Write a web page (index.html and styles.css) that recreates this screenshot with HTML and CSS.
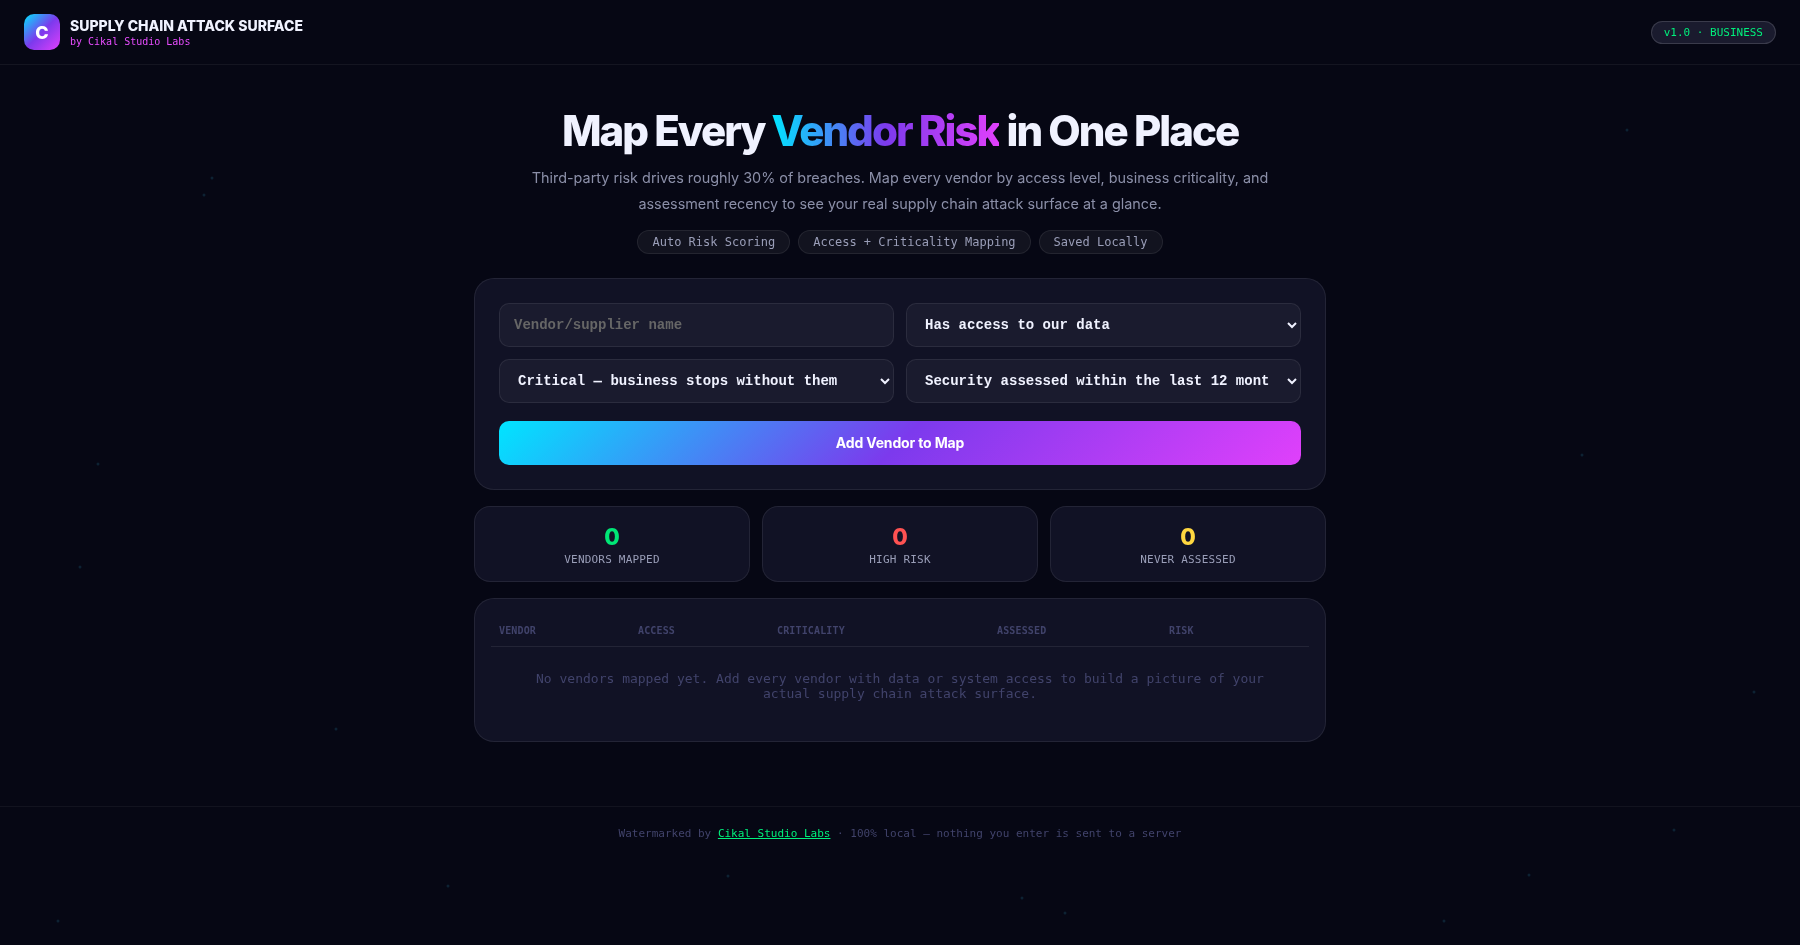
FILE: index.html
```html
<!DOCTYPE html>
<html lang="en">
<head>
  <meta charset="UTF-8">
  <title>Supply Chain Attack Surface</title>
  <link rel="stylesheet" href="styles.css">
</head>
<body>
  <svg class="stars" width="1800" height="945" viewBox="0 0 1800 945" aria-hidden="true">
    <circle cx="1627" cy="130" r="1.5"/><circle cx="212" cy="178" r="1.5"/><circle cx="204" cy="195" r="1.5"/>
    <circle cx="98" cy="464" r="1.5"/><circle cx="1582" cy="455" r="1.5"/><circle cx="336" cy="729" r="1.5"/>
    <circle cx="1754" cy="692" r="1.5"/><circle cx="1674" cy="830" r="1.5"/><circle cx="448" cy="886" r="1.5"/>
    <circle cx="728" cy="876" r="1.5"/><circle cx="1022" cy="898" r="1.5"/><circle cx="1065" cy="913" r="1.5"/>
    <circle cx="58" cy="921" r="1.5"/><circle cx="1444" cy="921" r="1.5"/><circle cx="1529" cy="875" r="1.5"/>
    <circle cx="80" cy="567" r="1.5"/>
  </svg>

  <header class="topbar">
    <div class="brand">
      <div class="logo">C</div>
      <div>
        <div class="brand-title">SUPPLY CHAIN ATTACK SURFACE</div>
        <div class="brand-sub">by Cikal Studio Labs</div>
      </div>
    </div>
    <span class="version">v1.0 · BUSINESS</span>
  </header>

  <main class="page">
    <section class="hero">
      <h1>Map Every <span class="grad">Vendor Risk</span> in One Place</h1>
      <p>Third-party risk drives roughly 30% of breaches. Map every vendor by access level, business criticality, and assessment recency to see your real supply chain attack surface at a glance.</p>
      <div class="pills">
        <span class="pill">Auto Risk Scoring</span>
        <span class="pill">Access + Criticality Mapping</span>
        <span class="pill">Saved Locally</span>
      </div>
    </section>

    <section class="card form-card">
      <div class="form-grid">
        <input class="field" type="text" placeholder="Vendor/supplier name">
        <select class="field">
          <option>Has access to our data</option>
          <option>Has access to our systems</option>
          <option>No direct access</option>
        </select>
        <select class="field">
          <option>Critical — business stops without them</option>
          <option>Important — painful to replace</option>
          <option>Low — easily replaced</option>
        </select>
        <select class="field">
          <option>Security assessed within the last 12 months</option>
          <option>Assessed over 12 months ago</option>
          <option>Never assessed</option>
        </select>
      </div>
      <button class="add-btn">Add Vendor to Map</button>
    </section>

    <section class="stats">
      <div class="stat">
        <div class="stat-num green">0</div>
        <div class="stat-label">VENDORS MAPPED</div>
      </div>
      <div class="stat">
        <div class="stat-num red">0</div>
        <div class="stat-label">HIGH RISK</div>
      </div>
      <div class="stat">
        <div class="stat-num yellow">0</div>
        <div class="stat-label">NEVER ASSESSED</div>
      </div>
    </section>

    <section class="card table-card">
      <table>
        <thead>
          <tr>
            <th class="col-vendor">VENDOR</th>
            <th class="col-access">ACCESS</th>
            <th class="col-crit">CRITICALITY</th>
            <th class="col-assessed">ASSESSED</th>
            <th>RISK</th>
          </tr>
        </thead>
        <tbody>
          <tr>
            <td class="empty" colspan="5">No vendors mapped yet. Add every vendor with data or system access to build a picture of your actual supply chain attack surface.</td>
          </tr>
        </tbody>
      </table>
    </section>
  </main>

  <footer class="footer">
    Watermarked by <a href="#">Cikal Studio Labs</a> · 100% local — nothing you enter is sent to a server
  </footer>
</body>
</html>
```

FILE: styles.css
```css
* { box-sizing: border-box; }
body { margin: 0; min-height: 945px; background: #060714; color: #f0f2ff; font-family: Inter, sans-serif; }
.stars { position: fixed; top: 0; left: 0; pointer-events: none; }
.stars circle { fill: #0d2233; }

.topbar { position: relative; display: flex; align-items: center; justify-content: space-between; height: 65px; padding: 0 24px; border-bottom: 1px solid rgba(255,255,255,.06); }
.brand { display: flex; align-items: center; gap: 10px; }
.logo { width: 36px; height: 36px; border-radius: 10px; background: linear-gradient(135deg, #00e5ff, #7c3aed 50%, #e040fb); color: #fff; font-size: 18px; font-weight: 800; display: flex; align-items: center; justify-content: center; }
.brand-title { font-size: 14px; font-weight: 800; line-height: 17px; color: #f0f2ff; }
.brand-sub { margin-top: 1px; font-family: "DejaVu Sans Mono", monospace; font-size: 10px; line-height: 13px; color: #e84dff; }
.version { font-family: "DejaVu Sans Mono", monospace; font-size: 11px; line-height: 13px; color: #00f07c; background: #1a1b2e; border: 1px solid rgba(255,255,255,.14); border-radius: 20px; padding: 4px 12px; }

.page { position: relative; width: 852px; margin: 0 auto; padding-top: 41px; }
.hero { text-align: center; }
.hero h1 { margin: 0; font-size: 42px; font-weight: 800; line-height: 50px; letter-spacing: -2px; color: #f0f2ff; }
.grad { background: linear-gradient(90deg, #00e5ff, #7c3aed 50%, #e040fb); -webkit-background-clip: text; background-clip: text; color: transparent; }
.hero p { margin: 9px auto 0; max-width: 760px; font-size: 14.4px; line-height: 25.9px; color: #8b8fa8; }
.pills { display: flex; justify-content: center; gap: 8px; margin-top: 13px; }
.pill { font-family: "DejaVu Sans Mono", monospace; font-size: 12px; line-height: 14px; color: #9a9eb8; background: #12131f; border: 1px solid rgba(255,255,255,.08); border-radius: 20px; padding: 4px 14px; }

.card { background: #111225; border: 1px solid rgba(255,255,255,.08); border-radius: 20px; }
.form-card { margin-top: 24px; padding: 24px; }
.form-grid { display: grid; grid-template-columns: 1fr 1fr; gap: 12px; }
.field { width: 100%; height: 44px; padding: 0 14px; background: #1a1b2e; color: #f0f2ff; border: 1px solid rgba(255,255,255,.08); border-radius: 10px; font-family: "Liberation Mono", monospace; font-size: 14px; font-weight: 700; outline: none; }
.field::placeholder { color: #666; }
.add-btn { display: block; width: 100%; height: 44px; margin-top: 18px; border: 0; border-radius: 10px; background: linear-gradient(135deg, #00e5ff, #7c3aed 50%, #e040fb); color: #fff; font-family: Inter, sans-serif; font-size: 14px; font-weight: 700; letter-spacing: -.15px; }

.stats { display: grid; grid-template-columns: repeat(3, 1fr); gap: 12px; margin-top: 16px; }
.stat { height: 76px; padding-top: 16px; text-align: center; background: #111225; border: 1px solid rgba(255,255,255,.08); border-radius: 16px; }
.stat-num { font-size: 22.5px; font-weight: 800; line-height: 27px; }
.green { color: #00e676; }
.red { color: #ff5252; }
.yellow { color: #ffd740; }
.stat-label { margin-top: 3px; font-family: "DejaVu Sans Mono", monospace; font-size: 11px; line-height: 13px; letter-spacing: .2px; color: #9a9eb8; }

.table-card { margin-top: 16px; height: 144px; padding: 16px; }
table { width: 100%; border-collapse: collapse; table-layout: fixed; font-family: "DejaVu Sans Mono", monospace; }
th { padding: 10px 8px 9px; text-align: left; font-size: 10px; font-weight: 700; line-height: 12px; letter-spacing: .15px; color: #41436b; border-bottom: 1px solid rgba(255,255,255,.08); }
.col-vendor, .col-access { width: 139px; }
.col-crit { width: 220px; }
.col-assessed { width: 172px; }
.empty { padding: 24px 30px; text-align: center; font-size: 13px; line-height: 15px; color: #41436b; }

.footer { position: relative; margin-top: 64px; padding: 20px 24px; border-top: 1px solid rgba(255,255,255,.05); text-align: center; font-family: "DejaVu Sans Mono", monospace; font-size: 11px; line-height: 13px; color: #41436b; }
.footer a { color: #00f07c; }
```
